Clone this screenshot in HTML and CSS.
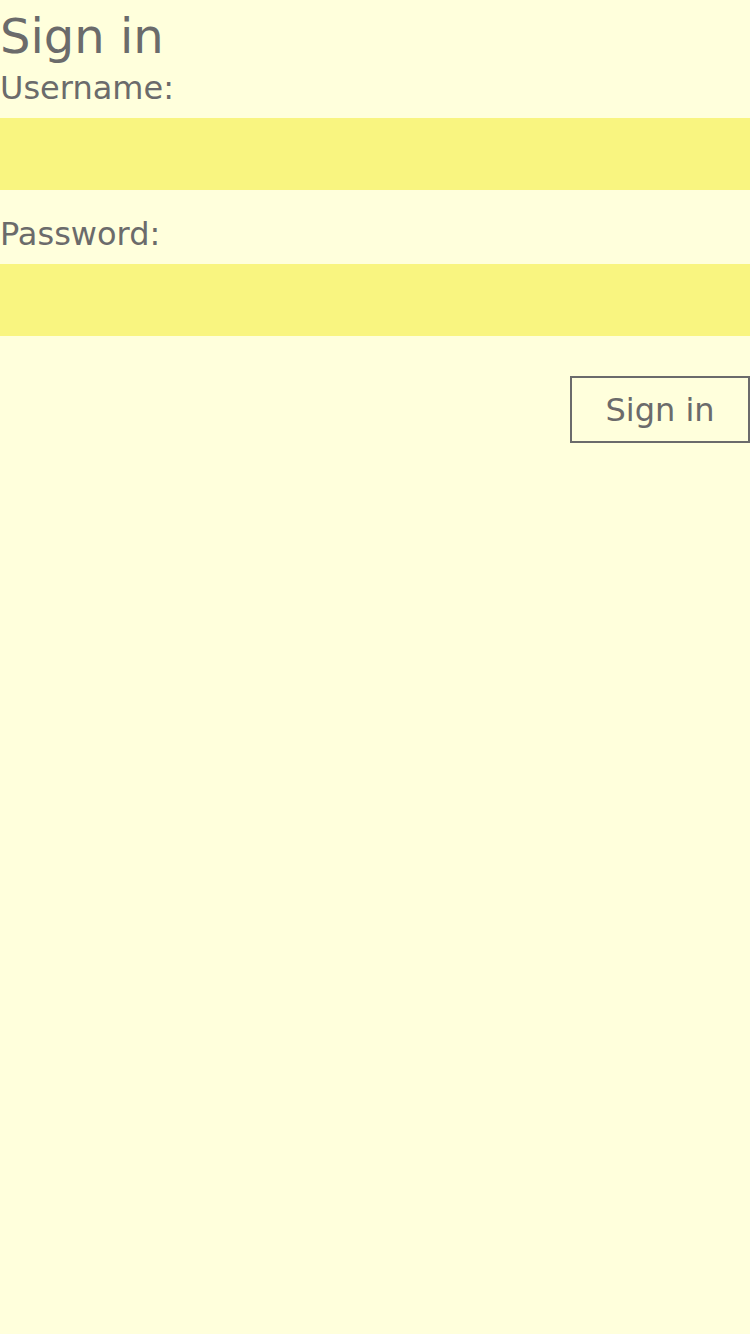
FILE: index.html
```html
<!DOCTYPE html>
<html>
<head>
<meta charset="utf-8">
<link rel="stylesheet" href="styles.css">
</head>
<body>
<form class="signin">
  <h1 class="title">Sign in</h1>
  <label class="field-label" for="u">Username:</label>
  <input class="field-input" id="u" type="text">
  <label class="field-label field-label--second" for="p">Password:</label>
  <input class="field-input" id="p" type="password">
  <div class="actions">
    <button class="btn" type="button">Sign in</button>
  </div>
</form>
</body>
</html>
```
FILE: styles.css
```css
html, body {
  margin: 0;
  padding: 0;
  background: #ffffdc;
  height: 100%;
}
body {
  font-family: "DejaVu Sans", Verdana, sans-serif;
  color: #6b6b6b;
}
.signin {
  display: flex;
  flex-direction: column;
}
.title {
  margin: 0;
  padding-top: 8px;
  font-size: 48px;
  line-height: 56px;
  font-weight: normal;
}
.field-label {
  display: block;
  margin-top: 6px;
  font-size: 32px;
  line-height: 37px;
}
.field-label--second {
  margin-top: 26px;
}
.field-input {
  display: block;
  box-sizing: border-box;
  width: 100%;
  height: 72px;
  margin: 11px 0 0;
  border: none;
  outline: none;
  background: #f9f580;
  font-family: inherit;
  font-size: 32px;
  padding: 0 8px;
}
.actions {
  display: flex;
  justify-content: flex-end;
  margin-top: 40px;
}
.btn {
  box-sizing: border-box;
  width: 180px;
  height: 67px;
  border: 2px solid #6b6b6b;
  background: transparent;
  color: #6b6b6b;
  font-family: inherit;
  font-size: 32px;
  padding: 0;
}
```
